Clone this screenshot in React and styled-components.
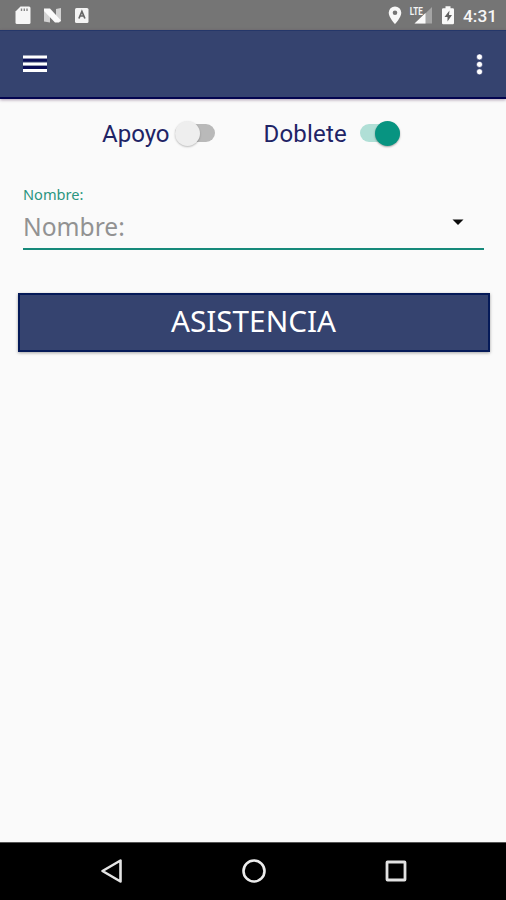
import React from "react";
import styled, { createGlobalStyle } from "styled-components";

const Global = createGlobalStyle`
  * { box-sizing: border-box; }
  body { margin: 0; background: #fafafa; }
`;

const Screen = styled.div`
  display: flex;
  flex-direction: column;
  width: 506px;
  height: 900px;
  background: #fafafa;
  overflow: hidden;
  font-family: "Noto Sans", sans-serif;
`;

const StatusBar = styled.header`
  display: flex;
  justify-content: space-between;
  flex: none;
  height: 30px;
  background: #757575;
`;

const StatusIcons = styled.svg`
  display: block;
  flex: none;
`;

const StatusGroup = styled.div`
  display: flex;
  align-items: center;
`;

const Clock = styled.span`
  width: 44px;
  padding: 2px 0 0 1px;
  color: #f7f7f7;
  font: 500 17.3px/28px Roboto, sans-serif;
  white-space: nowrap;
`;

const AppBar = styled.nav`
  display: flex;
  align-items: center;
  justify-content: space-between;
  flex: none;
  height: 69px;
  padding: 0 23px;
  background: #35436f;
  border-top: 1px solid #253769;
  border-bottom: 2px solid #03044f;
  box-shadow: 0 1px 3px rgba(60, 20, 70, 0.4);
`;

const IconButton = styled.button`
  display: flex;
  padding: 0;
  border: 0;
  background: none;
`;

const Content = styled.main`
  flex: 1;
  padding: 15px 16px 0 18px;
`;

const Switches = styled.div`
  display: flex;
  align-items: center;
  height: 40px;
  padding-left: 84px;
`;

const SwitchLabel = styled.label`
  display: flex;
  align-items: center;
  width: ${(p) => p.$width}px;
  color: #1f2466;
  font: 400 24px/28px Roboto, sans-serif;
  letter-spacing: ${(p) => p.$spacing || 0}px;
`;

const Track = styled.span`
  display: flex;
  align-items: center;
  justify-content: ${(p) => (p.$on ? "flex-end" : "flex-start")};
  width: 40px;
  height: 18px;
  margin: -2px 0 0 ${(p) => p.$gap}px;
  border-radius: 9px;
  background: ${(p) => (p.$on ? "#b0dfd6" : "#b9b9b9")};
`;

const Thumb = styled.span`
  flex: none;
  width: 25px;
  height: 25px;
  border-radius: 50%;
  background: ${(p) => (p.$on ? "#079481" : "#eeeeee")};
  box-shadow: 0 1px 2px rgba(0, 0, 0, ${(p) => (p.$on ? 0.35 : 0.25)});
`;

const Field = styled.div`
  margin: 30px 6px 0 5px;
  height: 66px;
  border-bottom: 2px solid #16897a;
`;

const FieldLabel = styled.div`
  color: #2a9580;
  font-size: 14.6px;
  line-height: 20px;
`;

const FieldValue = styled.div`
  display: flex;
  align-items: center;
  justify-content: space-between;
  height: 45px;
  padding-right: 20px;
  color: #929292;
  font-size: 24.6px;
  line-height: 34px;
`;

const Caret = styled.svg`
  margin-top: -9px;
`;

const ActionButton = styled.button`
  display: block;
  width: 100%;
  height: 59px;
  margin-top: 43px;
  padding: 0 1px 3px 0;
  border: 2px solid #051a58;
  background: #35436f;
  box-shadow: 0 1px 3px rgba(0, 0, 0, 0.35);
  color: #fff;
  font: 400 29.7px/40px "Noto Sans", sans-serif;
`;

const NavBar = styled.footer`
  display: flex;
  align-items: center;
  justify-content: center;
  gap: 118px;
  flex: none;
  height: 58px;
  padding: 0 0 1px 2px;
  background: #000;
  border-top: 1px solid #555;
`;

function Switch({ label, on, width, gap, spacing }) {
  return (
    <SwitchLabel $width={width} $spacing={spacing}>
      {label}
      <Track $on={on} $gap={gap}>
        <Thumb $on={on} />
      </Track>
    </SwitchLabel>
  );
}

export default function App() {
  return (
    <>
      <Global />
      <Screen>
        <StatusBar>
          <StatusIcons width="100" height="30" viewBox="0 0 100 30">
            <path fill="#f6f6f6" d="M20.5 6.500H29q1.5 0 1.5 1.5v14.500Q30.500 24 29 24H17q-1.500 0-1.500-1.500V11.500z" />
            <path stroke="#858585" strokeWidth="1.4" d="M21.500 8.500v2.500M24.300 8.500v2.500M27 8.500v2.500" />
            <path fill="#d2d2d2" d="M44 9l6 3v10.500l-6-1zM56 9l5-1v13.500l-5-1z" />
            <path fill="#fafafa" d="M44 8.500h6L61 20.500l-2 2h-4L44 11z" />
            <rect x="75" y="8" width="13.500" height="15" rx="1.500" fill="#f4f4f4" />
            <path d="M78.900 18.500l3-7 3 7M80 16h3.500" fill="none" stroke="#666" strokeWidth="1.700" />
          </StatusIcons>
          <StatusGroup>
            <StatusIcons width="74" height="30" viewBox="388 0 74 30">
              <path fill="#f8f8f8" fillRule="evenodd" d="M395 6.500a6.300 6.300 0 0 0-6.300 6.300c0 4.500 6.300 11.400 6.300 11.400s6.300-6.900 6.300-11.400A6.300 6.300 0 0 0 395 6.500m0 4a2.300 2.300 0 1 1 0 4.600a2.300 2.300 0 0 1 0-4.600" />
              <path fill="#a4a4a4" d="M432 7v16.500h-17z" />
              <path fill="#fafafa" d="M425.500 13v10.500h-11z" />
              <text x="409.800" y="14.500" fill="#f4f4f4" fontFamily="Roboto, sans-serif" fontWeight="700" fontSize="10.500" textLength="13" lengthAdjust="spacingAndGlyphs">LTE</text>
              <path fill="#f8f8f8" d="M445.500 6.300h5v2h2.300q1.200 0 1.200 1.200V23q0 1.300-1.200 1.300h-9.600q-1.200 0-1.200-1.300V9.500q0-1.200 1.200-1.200h2.300z" />
              <path fill="#606060" d="M449.500 10.500l-5 6.500h3v4.500l4.500-6.500h-3z" />
            </StatusIcons>
            <Clock>4:31</Clock>
          </StatusGroup>
        </StatusBar>

        <AppBar>
          <IconButton aria-label="Menú">
            <svg width="24" height="20" viewBox="0 0 24 20">
              <path fill="#0a0e57" d="M0 4.500h24v3H0zM0 12h24v3H0z" />
              <path fill="#fff" d="M0 1.500h24v3H0zM0 8.500h24v3H0zM0 15h24v3H0z" />
            </svg>
          </IconButton>
          <IconButton aria-label="Más opciones">
            <svg width="8" height="24" viewBox="0 0 8 24" fill="#fff" stroke="#111d5b" strokeWidth=".5">
              <circle cx="4.500" cy="4.900" r="3" />
              <circle cx="4.500" cy="12.400" r="3" />
              <circle cx="4.500" cy="19.800" r="3" />
            </svg>
          </IconButton>
        </AppBar>

        <Content>
          <Switches>
            <Switch label="Apoyo" width={161.5} gap={5} />
            <Switch label="Doblete" on width={150} gap={13.5} spacing={0.2} />
          </Switches>
          <Field>
            <FieldLabel>Nombre:</FieldLabel>
            <FieldValue>
              Nombre:
              <Caret width="12" height="7" viewBox="0 0 12 7">
                <path d="M.5 .5h11L6 6z" fill="#0b0b0b" />
              </Caret>
            </FieldValue>
          </Field>
          <ActionButton>ASISTENCIA</ActionButton>
        </Content>

        <NavBar>
          <IconButton aria-label="Atrás">
            <svg width="24" height="26" viewBox="0 0 24 26">
              <path d="M20.500 2.500v21L2.500 13z" fill="none" stroke="#e4e4e4" strokeWidth="2.600" strokeLinejoin="round" />
            </svg>
          </IconButton>
          <IconButton aria-label="Inicio">
            <svg width="24" height="24" viewBox="0 0 24 24">
              <circle cx="12" cy="12" r="10.500" fill="none" stroke="#ececec" strokeWidth="2.600" />
            </svg>
          </IconButton>
          <IconButton aria-label="Recientes">
            <svg width="24" height="24" viewBox="0 0 24 24">
              <rect x="3" y="3" width="18" height="18" rx=".5" fill="none" stroke="#e2e2e2" strokeWidth="2.800" />
            </svg>
          </IconButton>
        </NavBar>
      </Screen>
    </>
  );
}
